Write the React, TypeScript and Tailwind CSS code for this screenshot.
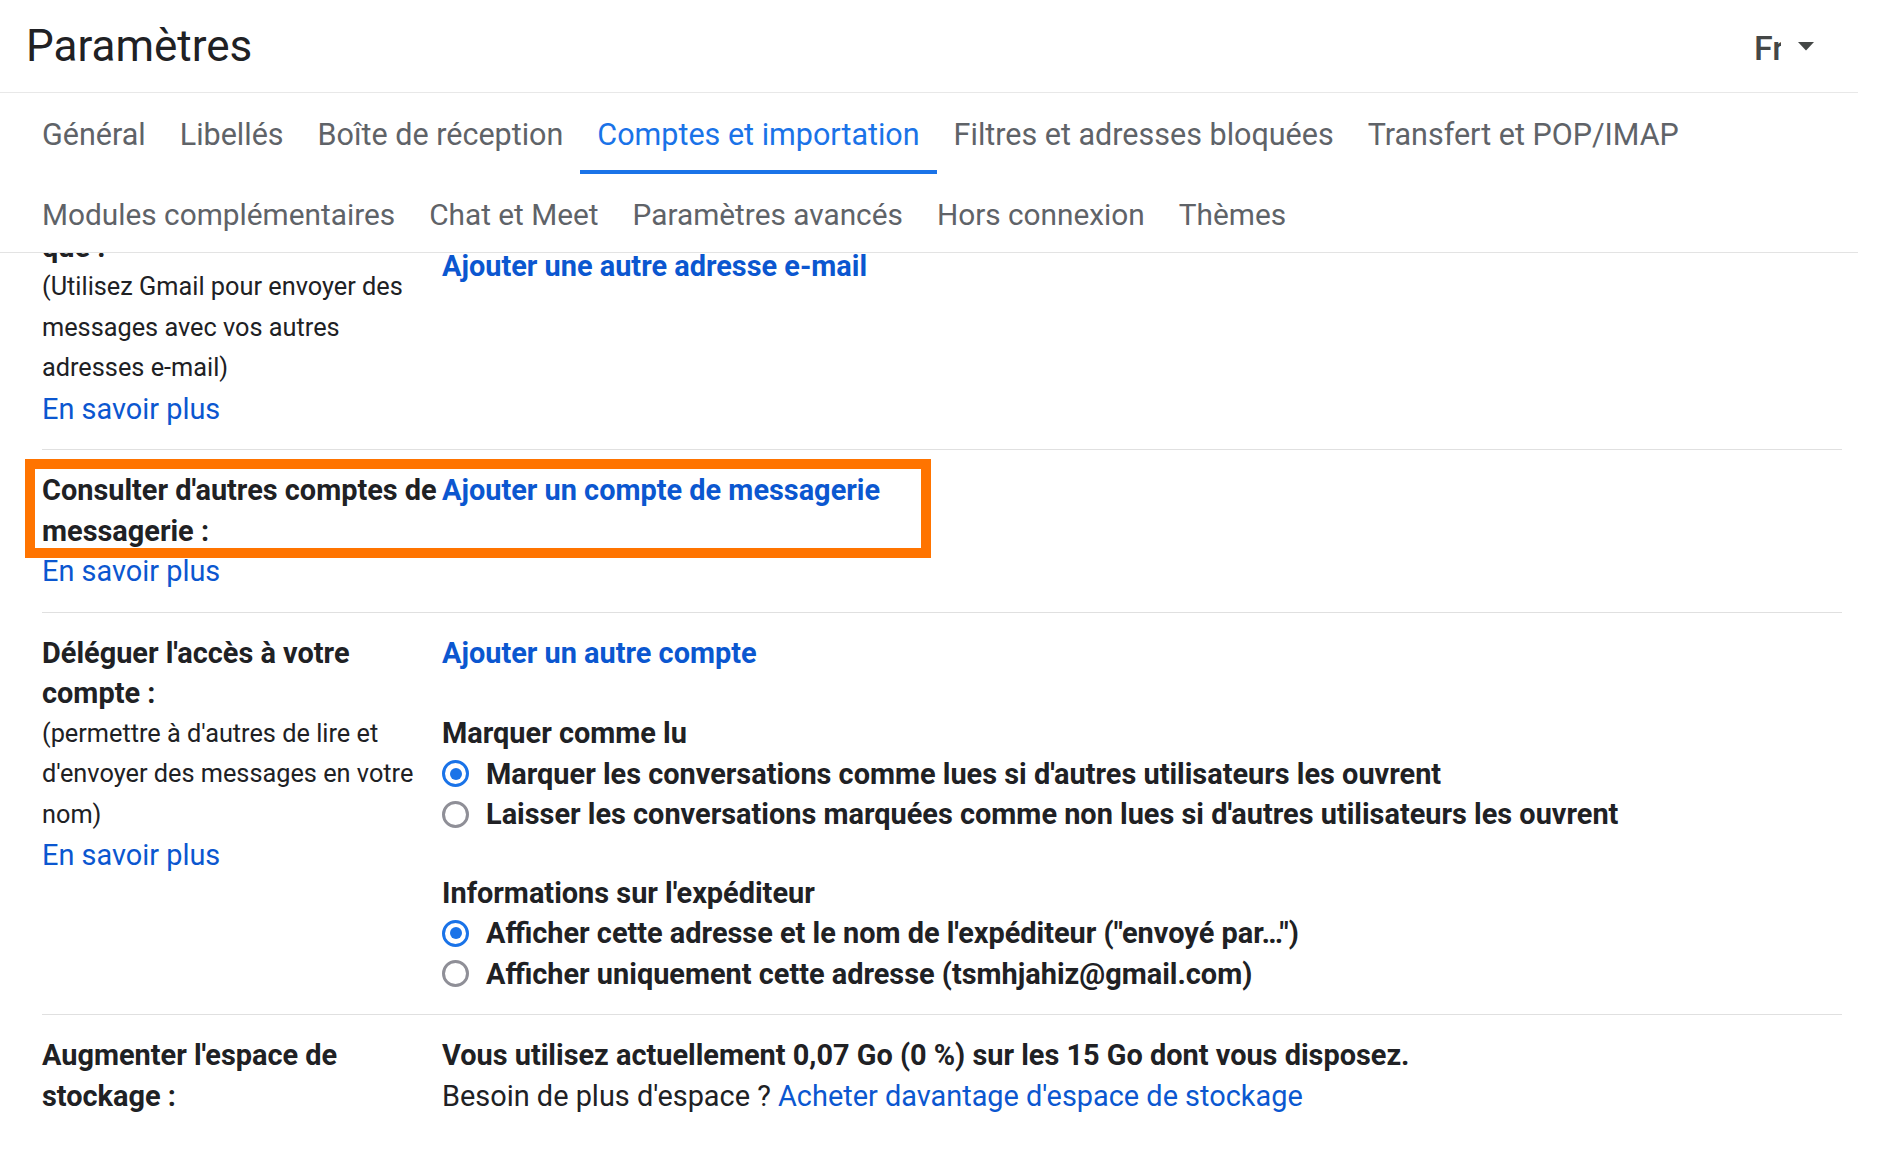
const row1 = ['Général', 'Libellés', 'Boîte de réception', 'Comptes et importation', 'Filtres et adresses bloquées', 'Transfert et POP/IMAP']
const row2 = ['Modules complémentaires', 'Chat et Meet', 'Paramètres avancés', 'Hors connexion', 'Thèmes']
const active = 'Comptes et importation'

function Tab({ label }: { label: string }) {
  const on = label === active
  return (
    <div
      className={
        on
          ? 'h-full flex items-center px-[17px] pt-[6px] border-b-[4px] border-[#1a73e8] text-[#1a73e8]'
          : 'h-full flex items-center px-[17px] pt-[6px] border-b-[4px] border-transparent text-[#5f6368]'
      }
    >
      {label}
    </div>
  )
}

function Radio({ checked, children }: { checked?: boolean; children: React.ReactNode }) {
  return (
    <div className="flex items-center">
      <span
        className={
          checked
            ? 'w-[27px] h-[27px] rounded-full border-[3px] border-[#1a73e8] flex items-center justify-center shrink-0'
            : 'w-[27px] h-[27px] rounded-full border-[3px] border-[#8f8f97] flex items-center justify-center shrink-0'
        }
      >
        {checked && <span className="w-[12px] h-[12px] rounded-full bg-[#1a73e8]" />}
      </span>
      <span className="ml-[17px] font-bold text-[#202124]">{children}</span>
    </div>
  )
}

function Learn() {
  return <div className="text-[#0b57d0]">En savoir plus</div>
}

function Row({ label, children, last }: { label: React.ReactNode; children: React.ReactNode; last?: boolean }) {
  return (
    <div className={last ? 'flex pt-[20px] pb-[20px]' : 'flex pt-[20px] pb-[20px] border-b border-[#e0e0e0]'}>
      <div className="w-[400px] shrink-0 whitespace-nowrap">{label}</div>
      <div className="flex-1 whitespace-nowrap">{children}</div>
    </div>
  )
}

export default function App() {
  return (
    <div className="relative w-[1890px] h-[1162px] bg-white overflow-hidden font-['Roboto',sans-serif] text-[#202124]">
      <div className="w-[1858px] h-full flex flex-col">
        {/* header */}
        <div className="h-[93px] shrink-0 flex items-center justify-between pl-[26px] pr-[44px] border-b border-[#e8e8e8]">
          <h1 className="text-[44px] leading-none text-[#202124]">Paramètres</h1>
          <div className="flex items-center gap-[17px] text-[#444746]">
            <div className="w-[27px] overflow-hidden text-[34px] font-medium leading-none pt-[4px]">Fr</div>
            <svg width="16" height="9" viewBox="0 0 16 9">
              <path d="M0 0h16L8 8.5z" fill="#444746" />
            </svg>
          </div>
        </div>

        {/* tabs */}
        <div className="shrink-0 pl-[25px] border-b border-[#e3e3e3]">
          <div className="flex h-[81px] text-[30.5px]">
            {row1.map((t) => (
              <Tab key={t} label={t} />
            ))}
          </div>
          <div className="flex h-[78px] items-center pt-[4px] text-[29.8px]">
            {row2.map((t) => (
              <div key={t} className="px-[17px] text-[#5f6368]">
                {t}
              </div>
            ))}
          </div>
        </div>

        {/* content, scrolled */}
        <div className="flex-1 min-h-0 overflow-hidden pl-[42px] pr-[16px] text-[28.9px] leading-[40.5px]">
          <div className="-mt-[87px]">
            <Row
              label={
                <>
                  <div className="font-bold">Envoyer des e-mails en tant</div>
                  <div className="font-bold">que :</div>
                  <div className="text-[25.3px]">(Utilisez Gmail pour envoyer des</div>
                  <div className="text-[25.3px]">messages avec vos autres</div>
                  <div className="text-[25.3px]">adresses e-mail)</div>
                  <Learn />
                </>
              }
            >
              <div className="mb-[19px] font-bold">tsmhjahiz &lt;tsmhjahiz@gmail.com&gt;</div>
              <div className="font-bold text-[#0b57d0]">Ajouter une autre adresse e-mail</div>
            </Row>

            <Row
              label={
                <>
                  <div className="font-bold">Consulter d'autres comptes de</div>
                  <div className="font-bold">messagerie :</div>
                  <Learn />
                </>
              }
            >
              <div className="font-bold text-[#0b57d0]">Ajouter un compte de messagerie</div>
            </Row>

            <Row
              label={
                <>
                  <div className="font-bold">Déléguer l'accès à votre</div>
                  <div className="font-bold">compte :</div>
                  <div className="text-[25.3px]">(permettre à d'autres de lire et</div>
                  <div className="text-[25.3px]">d'envoyer des messages en votre</div>
                  <div className="text-[25.3px]">nom)</div>
                  <Learn />
                </>
              }
            >
              <div className="font-bold text-[#0b57d0]">Ajouter un autre compte</div>
              <div className="font-bold mt-[40px]">Marquer comme lu</div>
              <Radio checked>Marquer les conversations comme lues si d'autres utilisateurs les ouvrent</Radio>
              <Radio>Laisser les conversations marquées comme non lues si d'autres utilisateurs les ouvrent</Radio>
              <div className="font-bold mt-[38px]">Informations sur l'expéditeur</div>
              <Radio checked>Afficher cette adresse et le nom de l'expéditeur ("envoyé par…")</Radio>
              <Radio>Afficher uniquement cette adresse (tsmhjahiz@gmail.com)</Radio>
            </Row>

            <Row
              last
              label={
                <>
                  <div className="font-bold">Augmenter l'espace de</div>
                  <div className="font-bold">stockage :</div>
                </>
              }
            >
              <div className="font-bold">Vous utilisez actuellement 0,07 Go (0 %) sur les 15 Go dont vous disposez.</div>
              <div>
                Besoin de plus d'espace ? <span className="text-[#0b57d0]">Acheter davantage d'espace de stockage</span>
              </div>
            </Row>
          </div>
        </div>
      </div>

      {/* annotation box */}
      <div className="absolute left-[25px] top-[459px] w-[906px] h-[99px] border-[10px] border-[#ff7400]" />
    </div>
  )
}
